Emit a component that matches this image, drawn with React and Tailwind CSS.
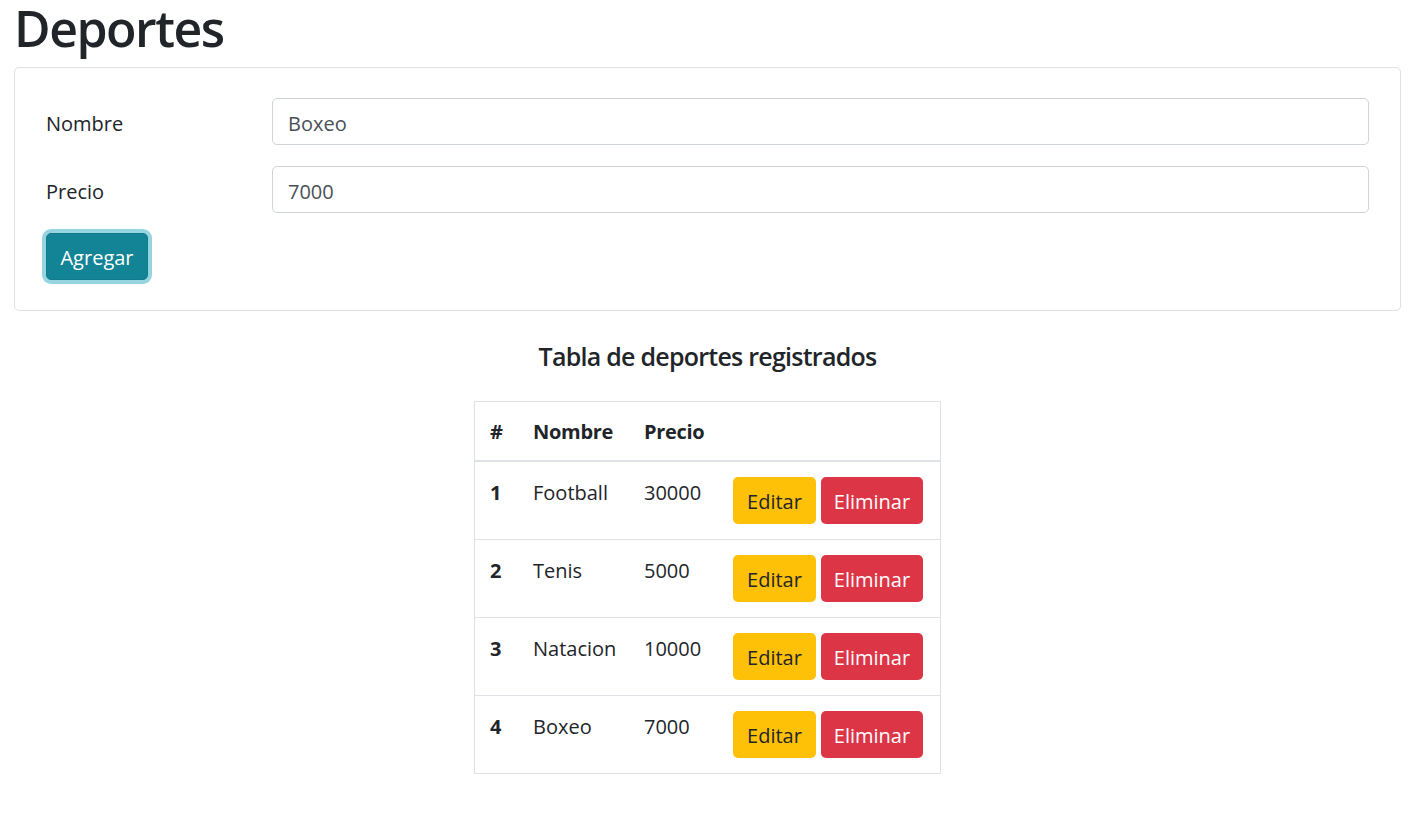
import React from "react";

const deportes = [
    { id: 1, nombre: "Football", precio: 30000 },
    { id: 2, nombre: "Tenis", precio: 5000 },
    { id: 3, nombre: "Natacion", precio: 10000 },
    { id: 4, nombre: "Boxeo", precio: 7000 },
];

function Campo({ label, value, className }) {
    return (
        <div className={`flex items-center ${className}`}>
            <label className="w-[226px] shrink-0 text-[20px] leading-[30px] pt-[4px]">
                {label}
            </label>
            <input
                className="flex-1 h-[47px] border border-[#ced4da] rounded-[5px] px-[15px] pt-[3px] text-[20px] text-[#495057] outline-none"
                defaultValue={value}
            />
        </div>
    );
}

export default function App() {
    return (
        <div className="font-['Open_Sans',sans-serif] text-[#212529] bg-white min-h-screen pl-[14px] pr-[24px]">
            <h1 className="text-[50px] font-semibold tracking-[-1.5px] leading-[56px] h-[56px] mb-[11px]">
                Deportes
            </h1>

            <div className="border border-[#dfdfdf] rounded-[5px] px-[31px] py-[30px]">
                <Campo label="Nombre" value="Boxeo" className="mb-[21px]" />
                <Campo label="Precio" value="7000" className="mb-[20px]" />
                <button className="w-[102px] h-[47px] pt-[2px] bg-[#138496] border border-[#117a8b] rounded-[5px] text-white text-[20px] leading-[30px] shadow-[0_0_0_4px_rgba(23,162,184,0.45)]">
                    Agregar
                </button>
            </div>

            <h5 className="mt-[30px] text-center text-[25px] font-semibold tracking-[-0.75px] leading-[30px]">
                Tabla de deportes registrados
            </h5>

            <div className="mt-[30px] mx-auto w-[467px] border border-[#dee2e6]">
                <table className="w-full table-fixed border-collapse text-[20px] leading-[30px]">
                    <colgroup>
                        <col className="w-[43px]" />
                        <col className="w-[111px]" />
                        <col className="w-[89px]" />
                        <col className="w-[222px]" />
                    </colgroup>
                    <thead>
                        <tr className="border-b-2 border-[#dee2e6] h-[59px]">
                            <th className="px-[15px] pt-[2px] text-left font-bold">#</th>
                            <th className="px-[15px] pt-[2px] text-left font-bold tracking-[-0.3px]">Nombre</th>
                            <th className="px-[15px] pt-[2px] text-left font-bold tracking-[-0.3px]">Precio</th>
                            <th></th>
                        </tr>
                    </thead>
                    <tbody>
                        {deportes.map((d, i) => (
                            <tr
                                key={d.id}
                                className={i > 0 ? "border-t border-[#dee2e6]" : ""}
                            >
                                <td className="px-[15px] pt-[16px] pb-[14px] align-top font-bold">{d.id}</td>
                                <td className="px-[15px] pt-[16px] pb-[14px] align-top whitespace-nowrap">{d.nombre}</td>
                                <td className="px-[15px] pt-[16px] pb-[14px] align-top">{d.precio}</td>
                                <td className="px-[15px] py-[15px] align-top">
                                    <div className="flex gap-[5px]">
                                        <button className="w-[83px] h-[47px] pt-[2px] bg-[#ffc107] rounded-[5px] text-[#212529] text-[20px]">
                                            Editar
                                        </button>
                                        <button className="w-[102px] h-[47px] pt-[2px] bg-[#dc3545] rounded-[5px] text-white text-[20px]">
                                            Eliminar
                                        </button>
                                    </div>
                                </td>
                            </tr>
                        ))}
                    </tbody>
                </table>
            </div>
        </div>
    );
}
